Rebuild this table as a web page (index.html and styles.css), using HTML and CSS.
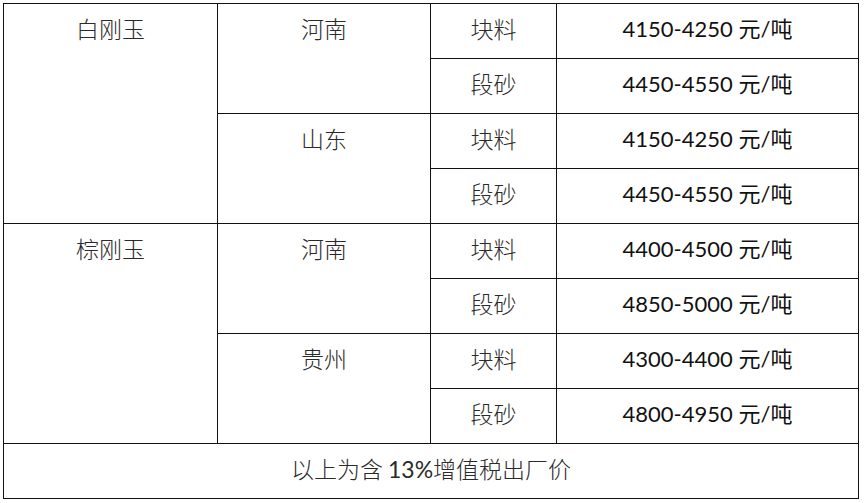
FILE: index.html
```html
<!DOCTYPE html>
<html lang="zh">
<head>
<meta charset="utf-8">
<link rel="stylesheet" href="styles.css">
</head>
<body>
<table class="price">
  <colgroup>
    <col class="c1"><col class="c2"><col class="c3"><col class="c4">
  </colgroup>
  <tr>
    <td rowspan="4" class="cn">白刚玉</td>
    <td rowspan="2" class="cn">河南</td>
    <td class="cn">块料</td>
    <td class="num">4150-4250 元/吨</td>
  </tr>
  <tr>
    <td class="cn">段砂</td>
    <td class="num">4450-4550 元/吨</td>
  </tr>
  <tr>
    <td rowspan="2" class="cn">山东</td>
    <td class="cn">块料</td>
    <td class="num">4150-4250 元/吨</td>
  </tr>
  <tr>
    <td class="cn">段砂</td>
    <td class="num">4450-4550 元/吨</td>
  </tr>
  <tr>
    <td rowspan="4" class="cn">棕刚玉</td>
    <td rowspan="2" class="cn">河南</td>
    <td class="cn">块料</td>
    <td class="num">4400-4500 元/吨</td>
  </tr>
  <tr>
    <td class="cn">段砂</td>
    <td class="num">4850-5000 元/吨</td>
  </tr>
  <tr>
    <td rowspan="2" class="cn">贵州</td>
    <td class="cn">块料</td>
    <td class="num">4300-4400 元/吨</td>
  </tr>
  <tr>
    <td class="cn">段砂</td>
    <td class="num">4800-4950 元/吨</td>
  </tr>
  <tr>
    <td colspan="4" class="note">以上为含 <span class="lat">13%</span>增值税出厂价</td>
  </tr>
</table>
</body>
</html>
```
FILE: styles.css
```css
html, body {
  margin: 0;
  background: #ffffff;
}
body {
  padding: 3px 0 0 3px;
}
.price {
  border-collapse: collapse;
  width: 855px;
  table-layout: fixed;
  color: #1a1a1a;
}
.c1 { width: 214px; }
.c2 { width: 213px; }
.c3 { width: 126px; }
.c4 { width: 302px; }
.price tr {
  height: 55px;
}
.price td {
  border: 1.5px solid #111;
  padding: 0;
  text-align: center;
  vertical-align: top;
  line-height: 49px;
  white-space: nowrap;
}
.cn {
  font-family: "Noto Sans CJK SC", sans-serif;
  font-size: 23px;
  font-weight: 300;
  color: #2a2a2a;
}
.num {
  font-family: Lato, "Noto Sans CJK SC", sans-serif;
  font-size: 22px;
  color: #111;
}
.note {
  font-family: "Noto Sans CJK SC", sans-serif;
  font-size: 23px;
  font-weight: 300;
  color: #2a2a2a;
}
.lat {
  font-family: Lato, sans-serif;
  font-weight: 400;
}
```
